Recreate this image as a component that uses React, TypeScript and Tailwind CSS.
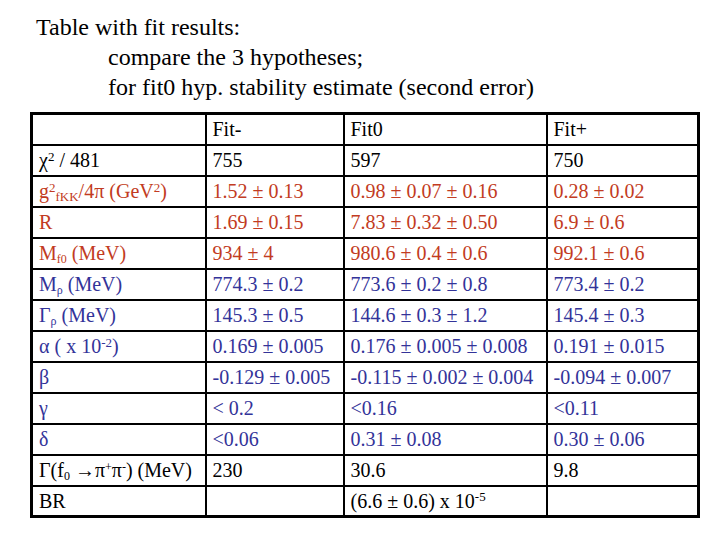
import React from 'react';

const RED = 'text-[#c23b22]';
const BLUE = 'text-[#333399]';

const pm = ' \u00b1 ';

interface Row {
  label: React.ReactNode;
  cells: React.ReactNode[];
  color: string;
}

const rows: Row[] = [
  {
    label: (
      <>
        {'\u03c7'}
        <sup className="text-[13px]">2</sup> / 481
      </>
    ),
    cells: ['755', '597', '750'],
    color: 'text-black',
  },
  {
    label: (
      <>
        g<sup className="text-[13px]">2</sup>
        <sub className="text-[13px]">fKK</sub>/4{'\u03c0'} (GeV<sup className="text-[13px]">2</sup>)
      </>
    ),
    cells: ['1.52' + pm + '0.13', '0.98' + pm + '0.07' + pm + '0.16', '0.28' + pm + '0.02'],
    color: RED,
  },
  {
    label: 'R',
    cells: ['1.69' + pm + '0.15', '7.83' + pm + '0.32' + pm + '0.50', '6.9' + pm + '0.6'],
    color: RED,
  },
  {
    label: (
      <>
        M<sub className="text-[12px]">f0</sub> (MeV)
      </>
    ),
    cells: ['934' + pm + '4', '980.6' + pm + '0.4' + pm + '0.6', '992.1' + pm + '0.6'],
    color: RED,
  },
  {
    label: (
      <>
        M<sub className="text-[12px]">{'\u03c1'}</sub> (MeV)
      </>
    ),
    cells: ['774.3' + pm + '0.2', '773.6' + pm + '0.2' + pm + '0.8', '773.4' + pm + '0.2'],
    color: BLUE,
  },
  {
    label: (
      <>
        {'\u0393'}
        <sub className="text-[12px]">{'\u03c1'}</sub> (MeV)
      </>
    ),
    cells: ['145.3' + pm + '0.5', '144.6' + pm + '0.3' + pm + '1.2', '145.4' + pm + '0.3'],
    color: BLUE,
  },
  {
    label: (
      <>
        {'\u03b1'} ( x 10<sup className="text-[13px]">-2</sup>)
      </>
    ),
    cells: ['0.169' + pm + '0.005', '0.176' + pm + '0.005' + pm + '0.008', '0.191' + pm + '0.015'],
    color: BLUE,
  },
  {
    label: '\u03b2',
    cells: ['-0.129' + pm + '0.005', '-0.115' + pm + '0.002' + pm + '0.004', '-0.094' + pm + '0.007'],
    color: BLUE,
  },
  {
    label: '\u03b3',
    cells: ['< 0.2', '<0.16', '<0.11'],
    color: BLUE,
  },
  {
    label: '\u03b4',
    cells: ['<0.06', '0.31' + pm + '0.08', '0.30' + pm + '0.06'],
    color: BLUE,
  },
  {
    label: (
      <>
        {'\u0393'}(f<sub className="text-[12px]">0</sub> {'\u2192'}
        {'\u03c0'}
        <sup className="text-[12px]">+</sup>
        {'\u03c0'}
        <sup className="text-[12px]">-</sup>) (MeV)
      </>
    ),
    cells: ['230', '30.6', '9.8'],
    color: 'text-black',
  },
  {
    label: 'BR',
    cells: [
      '',
      <>
        (6.6{pm}0.6) x 10<sup className="text-[13px]">-5</sup>
      </>,
      '',
    ],
    color: 'text-black',
  },
];

const cell = 'border-2 border-black h-[31px] pl-[6px] pr-1 py-0 align-middle whitespace-nowrap leading-none';

export default function App() {
  return (
    <div className="w-[720px] h-[540px] bg-white overflow-hidden font-['Liberation_Serif'] text-black">
      <div className="pt-[12px] pl-[36px] text-[24px] leading-[30px]">
        <div>Table with fit results:</div>
        <div className="pl-[72px]">compare the 3 hypotheses;</div>
        <div className="pl-[72px]">for fit0 hyp. stability estimate (second error)</div>
      </div>
      <table className="mt-[10px] ml-[30px] w-[667px] table-fixed border-collapse border-[3px] border-black text-[20px] font-['Liberation_Serif']">
        <colgroup>
          <col className="w-[174px]" />
          <col className="w-[138px]" />
          <col className="w-[203px]" />
          <col className="w-[152px]" />
        </colgroup>
        <tbody>
          <tr>
            <td className={cell}></td>
            <td className={cell}>Fit-</td>
            <td className={cell}>Fit0</td>
            <td className={cell}>Fit+</td>
          </tr>
          {rows.map((r, i) => (
            <tr key={i} className={r.color}>
              <td className={cell}>{r.label}</td>
              {r.cells.map((c, j) => (
                <td key={j} className={cell}>
                  {c}
                </td>
              ))}
            </tr>
          ))}
        </tbody>
      </table>
    </div>
  );
}
